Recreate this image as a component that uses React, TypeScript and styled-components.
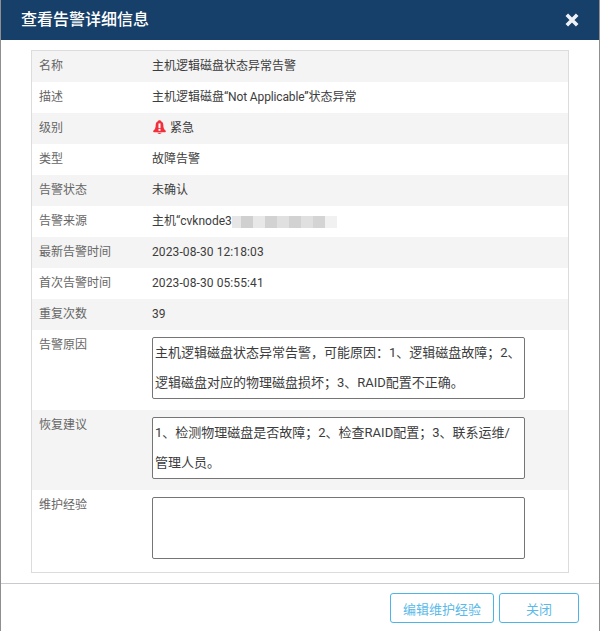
import React from "react";
import styled, { createGlobalStyle } from "styled-components";

const Global = createGlobalStyle`
  html, body { margin: 0; padding: 0; background: #fff; }
  body { font-family: Roboto, "Noto Sans CJK SC", sans-serif; }
`;

const Dialog = styled.div`
  width: 600px;
  height: 631px;
  box-sizing: border-box;
  border-left: 1px solid #8f8f8f;
  border-right: 1px solid #8f8f8f;
  display: flex;
  flex-direction: column;
  background: #fff;
  overflow: hidden;
`;
const Header = styled.header`
  height: 40px;
  flex: none;
  background: #163f69;
  display: flex;
  align-items: center;
  justify-content: space-between;
  padding: 0 20px 0 20px;
`;
const Title = styled.h1`
  margin: 0;
  color: #fff;
  font-size: 16px;
  font-weight: 500;
  line-height: 40px;
`;
const Close = styled.button`
  border: 0;
  padding: 0;
  background: none;
  width: 14px;
  height: 14px;
  display: flex;
  color: #eef2f6;
`;
const Body = styled.main`
  flex: none;
  height: 544px;
  padding: 10px 30px 0 30px;
  box-sizing: border-box;
  border-bottom: 1px solid #c9c9d0;
`;
const Table = styled.div`
  border: 1px solid #dcdcdc;
  height: 523px;
  box-sizing: border-box;
`;
const Row = styled.div<{ $h?: number; $shade?: boolean }>`
  display: grid;
  grid-template-columns: 120px 1fr;
  height: ${(p) => p.$h ?? 31}px;
  background: ${(p) => (p.$shade ? "#f4f4f4" : "#fff")};
`;
const Label = styled.div`
  padding-left: 7px;
  font-size: 12px;
  line-height: 30px;
  color: #666;
`;
const Value = styled.div`
  font-size: 12px;
  line-height: 30px;
  color: #3c3c3c;
  display: flex;
  align-items: center;
  height: 30px;
  white-space: pre;
`;
const Latin = styled.span<{ $spacing: number }>`
  letter-spacing: ${(p) => p.$spacing}px;
`;
const AlertIcon = styled.svg`
  width: 13px;
  height: 14px;
  margin: -2px 4px 0 1px;
  flex: none;
`;
const Mosaic = styled.span`
  display: flex;
  height: 12px;
  margin-top: 1px;
`;
const Tile = styled.span<{ $c: string }>`
  width: 12px;
  height: 12px;
  background: ${(p) => p.$c};
  &:first-child {
    width: 9px;
  }
`;
const AreaCell = styled.div`
  padding-top: 7px;
`;
const Area = styled.div`
  width: 373px;
  height: 62px;
  box-sizing: border-box;
  border: 1px solid #757575;
  border-radius: 2px;
  padding: 0 2px;
  font-size: 13px;
  line-height: 30px;
  color: #3c3c3c;
  background: #fff;
  white-space: nowrap;
  overflow: hidden;
`;
const Footer = styled.footer`
  flex: 1;
  display: flex;
  justify-content: flex-end;
  align-items: flex-start;
  gap: 5px;
  padding: 9px 20px 0 0;
`;
const Button = styled.button<{ $w: number }>`
  width: ${(p) => p.$w}px;
  height: 30px;
  border: 1px solid #4db5e6;
  border-radius: 3px;
  background: #fff;
  color: #5bbae8;
  font-family: inherit;
  font-size: 13px;
  padding: 0;
`;

const tiles = ["#e6e6e6", "#d0d0d0", "#e8e8e8", "#d2d2d2", "#e0e0e0", "#d2d2d2", "#e0e0e0", "#d4d4d4", "#f1f1f1"];

const rows: [string, React.ReactNode][] = [
  ["名称", "主机逻辑磁盘状态异常告警"],
  ["描述", <>主机逻辑磁盘<Latin $spacing={-0.14}>“Not Applicable”</Latin>状态异常</>],
  [
    "级别",
    <>
      <AlertIcon viewBox="0 0 13 14">
        <path d="M6.5 0.2c1.1 0 1.6.6 1.8 1.4 1.4.6 1.9 1.8 2 3.3.1 2.4.5 4.3 2.2 5.7.6.6.4 1.6-.5 1.6H1c-.9 0-1.1-1-.5-1.6 1.7-1.4 2.1-3.3 2.2-5.7.1-1.5.6-2.7 2-3.3.2-.8.7-1.4 1.8-1.4z" fill="#f0303c" />
        <path d="M4.4 12.8h4.2c-.2.7-1.1 1.1-2.1 1.1s-1.9-.4-2.1-1.1z" fill="#f0303c" />
        <rect x="5.5" y="3.4" width="2" height="4.8" fill="#fff" />
        <rect x="5.5" y="9" width="2" height="1.8" fill="#fff" />
      </AlertIcon>
      紧急
    </>,
  ],
  ["类型", "故障告警"],
  ["告警状态", "未确认"],
  [
    "告警来源",
    <>
      主机“cvknode3
      <Mosaic>
        {tiles.map((c, i) => (
          <Tile key={i} $c={c} />
        ))}
      </Mosaic>
    </>,
  ],
  ["最新告警时间", <Latin $spacing={0.1}>2023-08-30 12:18:03</Latin>],
  ["首次告警时间", <Latin $spacing={0.1}>2023-08-30 05:55:41</Latin>],
  ["重复次数", "39"],
];

const areas: [string, React.ReactNode, number][] = [
  ["告警原因", <>主机逻辑磁盘状态异常告警，可能原因：1、逻辑磁盘故障；2、<br />逻辑磁盘对应的物理磁盘损坏；3、RAID配置不正确。</>, 80],
  ["恢复建议", <>1、检测物理磁盘是否故障；2、检查RAID配置；3、联系运维/<br />管理人员。</>, 80],
  ["维护经验", "", 81],
];

export default function App() {
  return (
    <>
      <Global />
      <Dialog>
        <Header>
          <Title>查看告警详细信息</Title>
          <Close aria-label="关闭">
            <svg viewBox="0 0 14 14" width="14" height="14">
              <path d="M1.8 1.8l10.4 10.4M12.2 1.8L1.8 12.2" stroke="currentColor" strokeWidth="3.6" fill="none" />
            </svg>
          </Close>
        </Header>
        <Body>
          <Table>
            {rows.map(([l, v], i) => (
              <Row key={l} $shade={i % 2 === 0}>
                <Label>{l}</Label>
                <Value>{v}</Value>
              </Row>
            ))}
            {areas.map(([l, v, h], i) => (
              <Row key={l} $h={h} $shade={i === 1}>
                <Label>{l}</Label>
                <AreaCell>
                  <Area>{v}</Area>
                </AreaCell>
              </Row>
            ))}
          </Table>
        </Body>
        <Footer>
          <Button $w={104}>编辑维护经验</Button>
          <Button $w={80}>关闭</Button>
        </Footer>
      </Dialog>
    </>
  );
}
